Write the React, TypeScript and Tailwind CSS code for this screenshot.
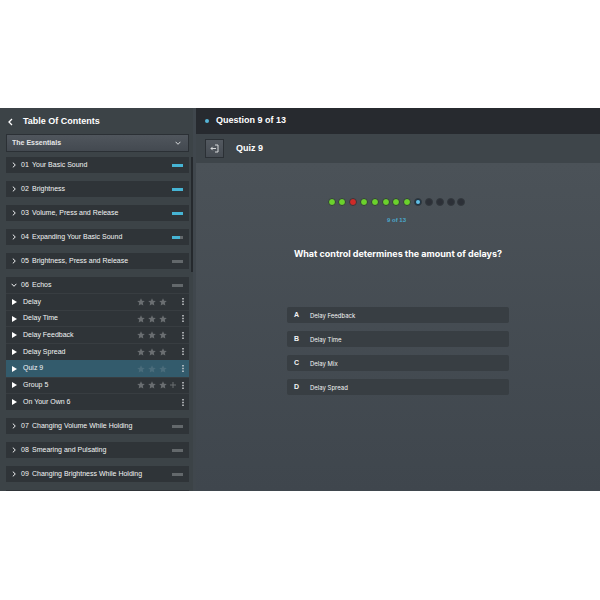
import React, { useState } from 'react';
import clsx from 'clsx';

type Chapter = { no: string; title: string; progress: number };
type Lesson = { title: string; stars?: boolean; plus?: boolean };

const chaptersBefore: Chapter[] = [
  { no: '01', title: 'Your Basic Sound', progress: 100 },
  { no: '02', title: 'Brightness', progress: 100 },
  { no: '03', title: 'Volume, Press and Release', progress: 100 },
  { no: '04', title: 'Expanding Your Basic Sound', progress: 75 },
  { no: '05', title: 'Brightness, Press and Release', progress: 0 },
];

const chaptersAfter: Chapter[] = [
  { no: '07', title: 'Changing Volume While Holding', progress: 0 },
  { no: '08', title: 'Smearing and Pulsating', progress: 0 },
  { no: '09', title: 'Changing Brightness While Holding', progress: 0 },
];

const lessons: Lesson[] = [
  { title: 'Delay', stars: true },
  { title: 'Delay Time', stars: true },
  { title: 'Delay Feedback', stars: true },
  { title: 'Delay Spread', stars: true },
  { title: 'Quiz 9', stars: true },
  { title: 'Group 5', stars: true, plus: true },
  { title: 'On Your Own 6' },
];

const answers = [
  { key: 'A', text: 'Delay Feedback' },
  { key: 'B', text: 'Delay Time' },
  { key: 'C', text: 'Delay Mix' },
  { key: 'D', text: 'Delay Spread' },
];

const results = [
  'right', 'right', 'wrong', 'right', 'right', 'right', 'right', 'right',
  'current', 'open', 'open', 'open', 'open',
];

const Chevron = ({ className }: { className?: string }) => (
  <svg viewBox="0 0 6 6" className={className} fill="none" stroke="currentColor" aria-hidden="true">
    <path d="M1.8 0.6 4.3 3 1.8 5.4" />
  </svg>
);

const Star = () => (
  <svg viewBox="0 0 24 24" className="size-2" fill="currentColor" aria-hidden="true">
    <path d="M12 1l3.300 7.400 8 .8-6 5.400L19 22.500 12 18.400 5 22.500l1.700-7.900-6-5.400 8-.8z" />
  </svg>
);

const ChapterRow = ({ chapter, open }: { chapter: Chapter; open?: boolean }) => (
  <button type="button" aria-expanded={!!open} className="flex h-4 w-full shrink-0 items-center bg-[#2f3438] pr-1.5 pl-[5px] text-left">
    <Chevron className={clsx('size-1.5 shrink-0', open && 'rotate-90')} />
    <span className="ml-1 w-[11px] shrink-0">{chapter.no}</span>
    <span className="flex-1 whitespace-nowrap">{chapter.title}</span>
    <span className="h-[3px] w-[11px] bg-[#63686b]">
      <span className="block h-full bg-[#46b4d4]" style={{ width: `${chapter.progress}%` }} />
    </span>
  </button>
);

const LessonRow = ({ lesson, active, onSelect }: { lesson: Lesson; active: boolean; onSelect: () => void }) => (
  <li className={clsx('flex items-center border-t pr-1', active ? 'border-[#335b6c] bg-[#335b6c]' : 'border-[#383d41]')}>
    <button type="button" onClick={onSelect} className="flex h-full flex-1 items-center gap-1.5 pl-1.5 text-left">
      <svg viewBox="0 0 5 6" className="h-1.5 w-[5px]" fill="white" aria-hidden="true">
        <path d="M0 0 5 3 0 6z" />
      </svg>
      {lesson.title}
    </button>
    {lesson.stars && (
      <span className={clsx('flex items-center gap-[3px]', active ? 'text-[#4a6c7b]' : 'text-[#6a6e71]')}>
        <Star />
        <Star />
        <Star />
        <span className="size-1.5">
          {lesson.plus && (
            <svg viewBox="0 0 6 6" stroke="currentColor" aria-hidden="true">
              <path d="M3 0v6M0 3h6" />
            </svg>
          )}
        </span>
      </span>
    )}
    <button type="button" aria-label={`${lesson.title} options`} className="ml-[5px] w-1">
      <svg viewBox="0 0 4 7" className="h-[7px] w-1" fill="#d5d8da" aria-hidden="true">
        <path d="M1.300 0h1.400v1.400H1.300zM1.300 2.800h1.400v1.400H1.300zM1.300 5.600h1.400V7H1.300z" />
      </svg>
    </button>
  </li>
);

const Sidebar: React.FC = () => {
  const [active, setActive] = useState('Quiz 9');

  return (
    <aside className="flex w-[196px] shrink-0 flex-col overflow-hidden border-r-3 border-[#40474d] bg-[#3c4347] pl-1.5">
      <div className="flex h-[26px] shrink-0 items-center gap-2 pt-0.5 pl-px">
        <button type="button" aria-label="Back">
          <svg viewBox="0 0 8 8" className="size-2" fill="none" stroke="white" strokeWidth="1.3" aria-hidden="true">
            <path d="M5 1 2 4l3 3" />
          </svg>
        </button>
        <h2 className="text-[9px] font-bold text-white">Table Of Contents</h2>
      </div>
      <div className="relative mr-1 shrink-0">
        <select
          aria-label="Course"
          className="block w-full appearance-none border border-[#2b3035] bg-linear-to-b from-[#50565d] to-[#434950] px-[5px] text-[7px] leading-4 font-bold text-[#e4e6e8]"
        >
          <option>The Essentials</option>
        </select>
        <Chevron className="pointer-events-none absolute top-1.5 right-2 size-1.5 rotate-90 text-[#d5d8da]" />
      </div>
      <div className="mt-[5px] flex min-h-0 flex-1 gap-0.5 text-[7px] text-[#f3f4f5]">
        <div className="flex flex-1 flex-col gap-2">
          {chaptersBefore.map((c) => (
            <ChapterRow key={c.no} chapter={c} />
          ))}
          <div className="shrink-0 bg-[#2f3438]">
            <ChapterRow chapter={{ no: '06', title: 'Echos', progress: 0 }} open />
            <ul className="grid h-[117px] auto-rows-fr">
              {lessons.map((l) => (
                <LessonRow key={l.title} lesson={l} active={l.title === active} onSelect={() => setActive(l.title)} />
              ))}
            </ul>
          </div>
          {chaptersAfter.map((c) => (
            <ChapterRow key={c.no} chapter={c} />
          ))}
          <div className="h-4 shrink-0 bg-[#2f3438]" />
        </div>
        <div className="h-[115px] w-0.5 bg-[#25292d]" />
      </div>
    </aside>
  );
};

const Quiz: React.FC = () => (
  <main className="flex min-w-0 flex-1 flex-col">
    <header className="flex h-[26px] shrink-0 items-center gap-[7px] bg-[#272a2f] pl-[9px]">
      <span className="size-1 rounded-full bg-[#55b4d6]" />
      <h1 className="text-[9px] font-bold text-white">Question 9 of 13</h1>
    </header>
    <div className="flex h-[29px] shrink-0 items-center gap-3 bg-[#3e454a] pl-[9px]">
      <button
        type="button"
        aria-label="Exit quiz"
        className="flex size-[19px] items-center justify-center border border-[#2b3035] bg-linear-to-b from-[#535960] to-[#454b52]"
      >
        <svg viewBox="0 0 9 9" className="size-[9px]" fill="none" stroke="#e4e6e8" strokeWidth="0.9" aria-hidden="true">
          <path d="M5 1h3v7H5M6 4.500H1M2.700 2.800l-1.700 1.700 1.700 1.700" />
        </svg>
      </button>
      <h2 className="text-[9px] font-bold text-white">Quiz 9</h2>
    </div>
    <section className="flex flex-1 flex-col items-center bg-linear-to-b from-[#4b5258] to-[#3f464d] pt-[35px]">
      <div className="flex flex-col items-center pr-[3px]">
        <div className="flex w-[138px] justify-between">
          {results.map((r, i) => (
            <span
              key={i}
              className={clsx(
                'flex size-2 items-center justify-center rounded-full border border-[#33393e]',
                r === 'right' && 'bg-[#6bd22c]',
                r === 'wrong' && 'bg-[#cf2a27]',
                r === 'current' && 'bg-[#1d3547]',
                r === 'open' && 'bg-[#2c3037]',
              )}
            >
              {r === 'current' && <span className="size-1 rounded-full bg-[#62c0e6]" />}
            </span>
          ))}
        </div>
        <p className="mt-2.5 text-[6px] leading-2 font-bold text-[#4aa8cb]">9 of 13</p>
      </div>
      <h3 className="mt-[22px] font-[Inter,sans-serif] text-[9px] leading-4 font-bold text-white">
        What control determines the amount of delays?
      </h3>
      <div className="mt-[45px] flex w-11/20 flex-col gap-2">
        {answers.map((a) => (
          <button key={a.key} type="button" className="flex h-4 items-center rounded-xs bg-[#383e43] pl-[7px] text-left text-[#f3f4f5]">
            <span className="w-4 text-[7px] font-bold">{a.key}</span>
            <span className="font-[Inter,sans-serif] text-[6px]">{a.text}</span>
          </button>
        ))}
      </div>
    </section>
  </main>
);

export default function App() {
  return (
    <div className="flex h-screen flex-col bg-white pt-27 pb-[109px] font-['Liberation_Sans',Arial,sans-serif]">
      <div className="flex min-h-0 flex-1 overflow-hidden">
        <Sidebar />
        <Quiz />
      </div>
    </div>
  );
}
